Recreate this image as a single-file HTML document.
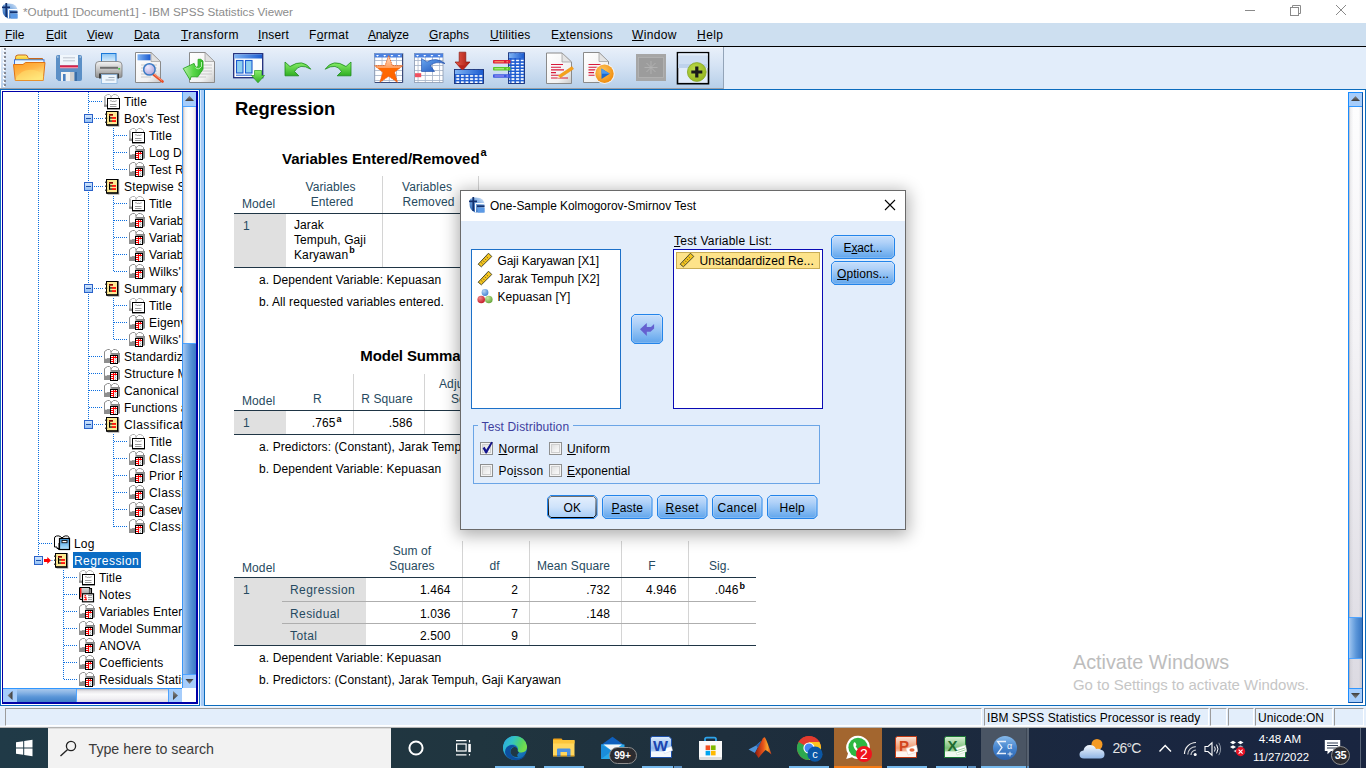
<!DOCTYPE html>
<html><head><meta charset="utf-8">
<style>
*{margin:0;padding:0;box-sizing:border-box}
html,body{width:1366px;height:768px;overflow:hidden;background:#fff;font-family:"Liberation Sans",sans-serif;}
.abs{position:absolute}
#titlebar{position:absolute;left:0;top:0;width:1366px;height:23px;background:#fff}
#titletext{position:absolute;left:23px;top:5px;font-size:11.7px;color:#8c8c8c;white-space:nowrap}
#menubar{position:absolute;left:0;top:23px;width:1366px;height:23px;background:#cddff0}
#menubar span{position:absolute;top:5px;font-size:12px;letter-spacing:.35px;color:#000;white-space:nowrap}
#menubar u{text-decoration:underline;text-underline-offset:1px}
#menuline{position:absolute;left:0;top:46px;width:1366px;height:1px;background:#000}
#toolbar{position:absolute;left:0;top:47px;width:723px;height:41px;background:linear-gradient(#e9f0fa 0%,#d5e3f4 45%,#b7cfe9 100%)}
#toolbar2{position:absolute;left:723px;top:47px;width:643px;height:42px;background:#e2edfa;border-left:1px solid #93a4b8}
#tbline1{position:absolute;left:0;top:88px;width:724px;height:1px;background:#9a9ea6}
#tbline2{position:absolute;left:0;top:89px;width:1366px;height:1px;background:#0c6cbd}
/* left panel */
#left{position:absolute;left:0;top:90px;width:200px;height:616px;background:#fff;border-left:1px solid #0c6cbd;border-bottom:1px solid #0c6cbd;border-right:1px solid #0c6cbd}
#leftin{position:absolute;left:2px;top:91px;width:196px;height:613px;border:1px solid #0000a8}
#treeclip{position:absolute;left:3px;top:92px;width:179px;height:596px;overflow:hidden}
#tree{position:absolute;left:-3px;top:-92px;width:400px;height:768px}
.vd{position:absolute;width:1px;background-image:linear-gradient(#0a6ee0 50%,transparent 50%);background-size:1px 2px}
.hd{position:absolute;height:1px;background-image:linear-gradient(90deg,#0a6ee0 50%,transparent 50%);background-size:2px 1px}
.tt{position:absolute;height:16px;line-height:18px;font-size:12px;letter-spacing:.15px;white-space:nowrap;color:#000;padding:0 1px}
.tt.sel{background:#0a6cc4;color:#fff}
#split{position:absolute;left:200px;top:90px;width:4px;height:616px;background:#a6cbf7;border-left:1px solid #d8ecff}
#right{position:absolute;left:204px;top:90px;width:1162px;height:616px;background:#fff;border-left:1px solid #0c6cbd;border-bottom:1px solid #0c6cbd}
#status{position:absolute;left:0;top:706px;width:1366px;height:22px;background:linear-gradient(#f4f8fd 0,#e3eefb 2px,#e3eefb 19px,#f4f7fb 20px,#f4f7fb 100%)}
#taskbar{position:absolute;left:0;top:728px;width:1366px;height:40px;background:#1c2a3b}
/* scrollbars */
.sbtn{position:absolute;background:#a9cdf7;border:1px solid #5aa0ee}
.vthumb{position:absolute;background:linear-gradient(90deg,#9cc4f4 0%,#6ba5e6 35%,#4d8cd6 70%,#3b78c4 100%)}
.vtrack{position:absolute;background:linear-gradient(90deg,#c9c9cf 0%,#f4f4f6 30%,#ffffff 60%,#e9e9ee 100%)}


#dlg{position:absolute;left:460px;top:190px;width:446px;height:340px;background:#e2edfb;border:1px solid #6a6a6a;box-shadow:0 3px 16px 2px rgba(0,0,0,.33)}
#dlgtitle{position:absolute;left:461px;top:191px;width:444px;height:30px;background:#fff}
.dt{position:absolute;white-space:nowrap;font-size:12px;line-height:18px;color:#000;letter-spacing:.12px}
.dt u{text-underline-offset:1px}
.btn{position:absolute;height:24px;width:50px;font-size:12px;line-height:22px;text-align:center;color:#000;letter-spacing:.15px;border:1px solid #2c89e8;border-radius:4px;background:linear-gradient(#d0e4fb 0,#b5d3f8 35%,#86bbf2 70%,#62a6ed 100%)}
.btn u{text-underline-offset:1px}
.btn.def{border-color:#14141e;background:linear-gradient(#e8f2fd 0,#d2e5fb 40%,#b0d2f7 75%,#94c3f4 100%)}
.cb{position:absolute;width:13px;height:13px;border:1px solid #8e8f8f;box-shadow:0 0 0 1px #f4f4f4 inset,0 0 0 2px #cfcfcf inset;background:linear-gradient(135deg,#d8d8d8 0,#f2f2f2 60%,#fff 100%)}
.bl{position:absolute;font-size:12px;text-align:center;color:#000;letter-spacing:.15px;white-space:nowrap}
.bl u{text-underline-offset:1px}

.sf{position:absolute;top:708px;height:18px;border-top:1px solid #9c9c9c;border-left:1px solid #9c9c9c;border-right:1px solid #fff;border-bottom:1px solid #fff;background:#e3eefb}
.st{position:absolute;top:709px;font-size:12px;line-height:18px;letter-spacing:.07px;white-space:nowrap;color:#000}
.ind{position:absolute;top:766px;height:2px;background:#76b9ed}
.ind.d{background:#5b8fc0}

</style></head><body>
<svg width="0" height="0" style="position:absolute">
<defs>
<linearGradient id="gbox" x1="0" y1="0" x2="0" y2="1"><stop offset="0" stop-color="#d6e8fd"/><stop offset="1" stop-color="#8fbef5"/></linearGradient>
<linearGradient id="glog" x1="0" y1="0" x2="0" y2="1"><stop offset="0" stop-color="#3f97dd"/><stop offset="1" stop-color="#b4e4ff"/></linearGradient>
<linearGradient id="gcov" x1="0" y1="0" x2="0" y2="1"><stop offset="0" stop-color="#d8d8d8"/><stop offset="1" stop-color="#a8a8a8"/></linearGradient>
<symbol id="i-box" viewBox="0 0 9 9"><rect x=".5" y=".5" width="8" height="8" fill="url(#gbox)" stroke="#2b62c9"/><rect x="2" y="4" width="5" height="1" fill="#1d4fa8"/></symbol>
<symbol id="i-arrow" viewBox="0 0 10 9"><path d="M1 3H4.3V1L8 4.5L4.3 8V6H1Z" fill="#f00"/><rect x="8.4" y="4" width="1" height="1" fill="#1672e0"/></symbol>
<symbol id="i-book" viewBox="0 0 17 17">
<path d="M.5 13.500V3.500L2 2.500L3.500 1.500H5.500L6.500 2.500L7 3.600L8.500 2.500L9.500 1.500H11.500L13.500 2.500L14.500 3.500V8H7.500V13.500Z" fill="#fff" stroke="#adadad"/>
<rect x="0" y="4" width="1.800" height="9.600" fill="#b0b0b0"/><rect x="0" y="11.600" width="4" height="2" fill="#8e8e8e"/>
<rect x="6.500" y="3" width="1" height="3" fill="#b0b0b0"/>
</symbol>
<symbol id="i-title" viewBox="0 0 17 17">
<use href="#i-book"/>
<rect x="3.5" y="5.5" width="12" height="10" fill="#fff" stroke="#000"/>
<rect x="3" y="15" width="13" height="1.4" fill="#000"/>
<path d="M6 7.8h1.6l1 1.2l1-1.2l1 1.2l1-1.2h1" stroke="#8a8a8a" fill="none" stroke-width=".8"/>
<rect x="6" y="11" width="6.500" height="1" fill="#9a9a9a"/><rect x="6" y="13" width="6.500" height="1" fill="#9a9a9a"/>
</symbol>
<symbol id="i-table" viewBox="0 0 17 17">
<path d="M.5 14.500V3.500L2 2.500L3.500 1.500H5.500L6.500 2.500L7 3.600L8.500 2.500L9.500 1.500H11.500L13.500 2.500L14.500 3.500V14.500Z" fill="#fff" stroke="#8c8c8c"/>
<rect x="7.500" y="5" width="7" height="9.500" fill="#949494"/><rect x="7" y="5" width="8" height="1.200" fill="#888"/>
<rect x="14.500" y="5" width="1.500" height="9.500" fill="#8c8c8c"/>
<rect x="6.500" y="3" width="1" height="4" fill="#8c8c8c"/>
<rect x="0" y="10.700" width="7.500" height="4.300" fill="#8e8e8e"/><rect x="3" y="10" width="4.500" height="1" fill="#999"/>
<rect x="6" y="7" width="8" height="9" fill="#000"/><rect x="7" y="8" width="6" height="7" fill="#fff"/>
<rect x="9" y="8" width="1.100" height="7" fill="#f00"/><rect x="7" y="9" width="6" height="1" fill="#f00"/>
<rect x="7" y="11" width="2.500" height="1" fill="#f00"/><rect x="7" y="13" width="2.500" height="1" fill="#f00"/><rect x="11" y="8" width="1" height="1" fill="#f00"/>
<rect x="11" y="10" width="1" height="5" fill="#a8b2b2"/><rect x="10.100" y="11" width="2.900" height="1" fill="#dfe6e6"/><rect x="10.100" y="13" width="2.900" height="1" fill="#dfe6e6"/>
</symbol>
<symbol id="i-head" viewBox="0 0 15 16">
<rect x="1.5" y=".5" width="11" height="13.5" fill="#fde992" stroke="#000"/>
<rect x="12" y="0" width="1.6" height="14.8" fill="#000"/><rect x="1.5" y="13.4" width="12.1" height="1.5" fill="#000"/>
<rect x="2.6" y="14.8" width="11.6" height=".7" fill="#888"/><rect x="13.6" y="1" width=".6" height="14.3" fill="#888"/>
<rect x="0" y="2.6" width="2.2" height="1.2" fill="#222"/><rect x="0" y="6.6" width="2.2" height="1.2" fill="#222"/><rect x="0" y="10.6" width="2.2" height="1.2" fill="#222"/>
<rect x="4" y="3" width="4" height="1.7" fill="#8b0000"/>
<rect x="4" y="4.700" width="1.100" height="5.800" fill="#000"/><rect x="4" y="6.400" width="3.200" height="1.100" fill="#000"/><rect x="4" y="9.500" width="3.200" height="1.100" fill="#000"/>
<rect x="7" y="6.1" width="4" height="1.7" fill="#f00"/><rect x="7" y="9.2" width="4" height="1.7" fill="#f00"/>
</symbol>
<symbol id="i-log" viewBox="0 0 17 17">
<path d="M.5 12V3Q.5 1.5 2.5 1Q5 .3 7 2L8 3L9 2Q11 .3 13.5 1Q15.5 2 15.5 4V8H5V13.5H3V12Z" fill="#fff" stroke="#000"/>
<rect x="5.5" y="3.5" width="10" height="11" fill="url(#glog)" stroke="#000" stroke-width="1.2"/>
<rect x="4.2" y="14" width="11.5" height="1" fill="#000"/>
<rect x="8" y="5.5" width="5" height="2.2" fill="#fff" stroke="#111" stroke-width=".9"/>
</symbol>
<symbol id="i-notes" viewBox="0 0 17 17">
<path d="M1 1.5H10.5V2.5H12.5V8H3.5V13.5H1.5L.5 12.5V2Z" fill="#fff" stroke="#000" stroke-width="1.1"/>
<rect x="2" y="2" width="8" height="5.8" fill="url(#gcov)"/>
<rect x="1.1" y="2" width="1.3" height="9.5" fill="#f00"/>
<rect x="10.3" y="2.8" width="1.6" height="5" fill="#fff" stroke="#000" stroke-width=".7"/>
<rect x="3.5" y="7.8" width="11" height="8" fill="#fff" stroke="#000" stroke-width="1.2"/>
<rect x="5.6" y="9" width="1.3" height="1.2" fill="#f00"/><path d="M5 11.2H6.9V13.6M4.8 13.8H8" stroke="#f00" stroke-width="1.1" fill="none"/>
<path d="M9 9.6h4M9 11.6h4M9 13.6h4" stroke="#8a8a8a" stroke-width=".9"/>
</symbol>

<linearGradient id="gspss" x1="1" y1="0" x2="0" y2="1"><stop offset="0" stop-color="#e4eefa"/><stop offset=".35" stop-color="#8db6e6"/><stop offset="1" stop-color="#1d5cb2"/></linearGradient>
<symbol id="i-spss" viewBox="0 0 16 16">
<path d="M1 2Q5 -.5 11 1Q15.5 3 15.5 8V15.5H6Q0.5 13 .5 7Z" fill="url(#gspss)"/>
<rect x="3.4" y="0" width="1.8" height="14" fill="#12306e"/><rect x="0" y="3.5" width="8" height="1.7" fill="#12306e"/>
<path d="M6.5 15.5V6.5H15.5" stroke="#fff" stroke-width="1" fill="none"/>
<rect x="8" y="8.3" width="7.5" height="1.8" fill="#12306e"/>
<rect x="9" y="11" width="6.5" height="4.5" fill="#5c9ae6"/>
</symbol>
<symbol id="i-ruler" viewBox="0 0 16 16">
<path d="M1.2 12.2L11.5 1.2L14.8 4.5L4.4 14.8Z" fill="#f5c51e" stroke="#4d4a2a" stroke-width="1"/>
<path d="M4.2 10.5l1.4 1.4M6 8.6l1.4 1.4M7.8 6.7l1.4 1.4M9.6 4.8l1.4 1.4" stroke="#6a5a20" stroke-width=".8"/>
</symbol>
<radialGradient id="gbl" cx=".35" cy=".3" r=".8"><stop offset="0" stop-color="#b5d4f5"/><stop offset="1" stop-color="#3d7dd0"/></radialGradient>
<radialGradient id="grd" cx=".35" cy=".3" r=".8"><stop offset="0" stop-color="#f08a8a"/><stop offset="1" stop-color="#c01020"/></radialGradient>
<radialGradient id="ggr" cx=".35" cy=".3" r=".8"><stop offset="0" stop-color="#c8e8a0"/><stop offset="1" stop-color="#5da030"/></radialGradient>
<symbol id="i-balls" viewBox="0 0 16 16">
<circle cx="8" cy="4.5" r="3.4" fill="url(#gbl)"/><circle cx="4.2" cy="11.5" r="3.8" fill="url(#grd)"/><circle cx="11.8" cy="11.5" r="3.8" fill="url(#ggr)"/>
</symbol>
</defs></svg>

<div id="titlebar"><svg class="abs" style="left:2px;top:3px" width="16" height="16"><use href="#i-spss"/></svg>
<div id="titletext">*Output1 [Document1] - IBM SPSS Statistics Viewer</div><svg class="abs" style="left:1240px;top:0" width="120" height="23"><g fill="none" stroke="#8a8a8a" stroke-width="1"><path d="M5 10.5H15"/><rect x="50.5" y="7.5" width="8" height="8"/><path d="M52.500 7.500V5.500H60.500V13.500H58.500"/><path d="M96 5L106 15M106 5L96 15"/></g></svg>
</div>
<div id="menubar">
<span style="left:5px;letter-spacing:0.05px"><u>F</u>ile</span>
<span style="left:46px;letter-spacing:0.05px"><u>E</u>dit</span>
<span style="left:87px;letter-spacing:0px"><u>V</u>iew</span>
<span style="left:134px;letter-spacing:0.1px"><u>D</u>ata</span>
<span style="left:181px;letter-spacing:0.4px"><u>T</u>ransform</span>
<span style="left:258px;letter-spacing:0.15px"><u>I</u>nsert</span>
<span style="left:309px;letter-spacing:0.3px">F<u>o</u>rmat</span>
<span style="left:368px;letter-spacing:-0.3px"><u>A</u>nalyze</span>
<span style="left:429px;letter-spacing:0.15px"><u>G</u>raphs</span>
<span style="left:490px;letter-spacing:0.2px"><u>U</u>tilities</span>
<span style="left:551px;letter-spacing:0.35px">E<u>x</u>tensions</span>
<span style="left:632px;letter-spacing:0.35px"><u>W</u>indow</span>
<span style="left:697px;letter-spacing:0.45px"><u>H</u>elp</span>
</div>
<div id="menuline"></div>
<div id="toolbar"></div><div id="toolbar2"></div>
<div class="abs" style="left:0;top:47px;width:1px;height:41px;background:#fff"></div>
<div class="abs" style="left:0;top:47px;width:723px;height:1px;background:#f8fbfe"></div>
<div class="abs" style="left:3px;top:49px;width:2px;height:39px;background-image:linear-gradient(#fff 0,#fff 2px,transparent 2px);background-size:2px 4px"></div>
<div class="abs" style="left:4px;top:48px;width:2px;height:39px;background-image:linear-gradient(#868a94 0,#868a94 2px,transparent 2px);background-size:2px 4px"></div>
<svg class="abs" style="left:0;top:47px" width="723" height="41" viewBox="0 47 723 41">
<defs>
<linearGradient id="tf1" x1="0" y1="0" x2="0" y2="1"><stop offset="0" stop-color="#fff27a"/><stop offset="1" stop-color="#f5b000"/></linearGradient>
<linearGradient id="tf2" x1="0" y1="0" x2=".6" y2="1"><stop offset="0" stop-color="#ff9a1e"/><stop offset=".5" stop-color="#ffb648"/><stop offset="1" stop-color="#ffee8a"/></linearGradient>
<linearGradient id="tpg" x1="0" y1="0" x2="1" y2="1"><stop offset="0" stop-color="#ffffff"/><stop offset=".7" stop-color="#f2f2f2"/><stop offset="1" stop-color="#c8c8c8"/></linearGradient>
<linearGradient id="tpr" x1="0" y1="0" x2="0" y2="1"><stop offset="0" stop-color="#f4f4f4"/><stop offset=".5" stop-color="#c4c4c4"/><stop offset="1" stop-color="#8e8e8e"/></linearGradient>
<linearGradient id="tbl" x1="0" y1="0" x2="0" y2="1"><stop offset="0" stop-color="#8ac4f4"/><stop offset="1" stop-color="#e8f6ff"/></linearGradient>
<linearGradient id="tgr" x1="0" y1="0" x2="0" y2="1"><stop offset="0" stop-color="#8af06a"/><stop offset="1" stop-color="#2fae22"/></linearGradient>
<linearGradient id="tgr2" x1="0" y1="0" x2="1" y2="0"><stop offset="0" stop-color="#b8f0a8"/><stop offset=".5" stop-color="#5ad848"/><stop offset="1" stop-color="#30b828"/></linearGradient>
<linearGradient id="tst" x1="0" y1="0" x2="0" y2="1"><stop offset="0" stop-color="#ffe0c8"/><stop offset=".45" stop-color="#ffa060"/><stop offset=".46" stop-color="#ff6a00"/><stop offset="1" stop-color="#ff6200"/></linearGradient>
<linearGradient id="thd" x1="0" y1="0" x2="1" y2="0"><stop offset="0" stop-color="#7fb4f4"/><stop offset="1" stop-color="#1c5cd0"/></linearGradient>
<linearGradient id="tba" x1="0" y1="0" x2="1" y2="1"><stop offset="0" stop-color="#6aa8f0"/><stop offset="1" stop-color="#1a50b8"/></linearGradient>
<linearGradient id="tra" x1="0" y1="0" x2="1" y2="0"><stop offset="0" stop-color="#e85a4a"/><stop offset="1" stop-color="#a81a10"/></linearGradient>
<radialGradient id="tor" cx=".4" cy=".35" r=".7"><stop offset="0" stop-color="#ffc860"/><stop offset="1" stop-color="#ef8a0a"/></radialGradient>
<radialGradient id="tgn" cx=".4" cy=".35" r=".7"><stop offset="0" stop-color="#bedc4a"/><stop offset="1" stop-color="#93b41e"/></radialGradient>
<radialGradient id="tln" cx=".35" cy=".3" r=".8"><stop offset="0" stop-color="#f0ecff"/><stop offset="1" stop-color="#a8a0d8"/></radialGradient>
<pattern id="tgrid" x="0" y="0" width="4.6" height="3.1" patternUnits="userSpaceOnUse"><rect width="4.6" height="3.1" fill="#1a5ad0"/><rect x=".9" y=".8" width="3" height="1.6" fill="#fff"/></pattern>
<pattern id="tgrid2" x="0" y="0" width="7.2" height="5" patternUnits="userSpaceOnUse"><rect width="7.2" height="5" fill="#fff"/><path d="M0 .4H7.2M.4 0V5" stroke="#a8b4c8" stroke-width=".9"/></pattern>
</defs>
<!-- folder -->
<path d="M15.500 62V57.500Q15.500 55 18 55H25.500Q27.500 55 28 57.500L28.500 58.500H42.500V62Z" fill="url(#tf1)" stroke="#c8661c"/>
<rect x="14.500" y="59.800" width="29.500" height="8" fill="#eaf6ff" stroke="#2a6ad8" stroke-width=".9"/>
<path d="M13.500 64.500H23L25.500 62.500H45L43.200 80.500H15.300Z" fill="url(#tf2)" stroke="#e07414"/>
<path d="M15 80.500Q20 68 34 70Q40 71 43.500 76L43.200 80.500Z" fill="#ffe070" opacity=".55"/>
<!-- save -->
<path d="M56 57Q56 55 58 55H80Q82 55 82 57V79Q82 81 80 81H58.500L56 78.500Z" fill="#5b8fc6"/>
<rect x="60" y="55" width="18" height="10.500" fill="#f0f6fc"/><path d="M63 57.800H75M63 60.800H75" stroke="#b0b8c4" stroke-width=".8"/>
<rect x="60" y="65.300" width="18" height="1.700" fill="#d82048"/><rect x="60" y="67" width="18" height="1.300" fill="#f08aa0"/>
<rect x="61" y="72" width="13.500" height="9" fill="#f2f2f2"/><rect x="70" y="72" width="4.500" height="9" fill="#d0d0d0"/><rect x="63" y="74" width="2.600" height="7" fill="#4a80c0"/><rect x="74.500" y="72" width="2.500" height="9" fill="#3a6ea8"/>
<rect x="57" y="56.500" width="1.500" height="1" fill="#dce8f4"/><rect x="79.500" y="56.500" width="1.500" height="1" fill="#dce8f4"/>
<!-- printer -->
<rect x="101.500" y="53.500" width="14.500" height="10" fill="url(#tbl)" stroke="#1a78d8"/>
<path d="M95.500 65Q95.500 61.500 99 61.500H118Q122 61.500 122 65V76Q122 77.500 120.500 77.500H97Q95.500 77.500 95.500 76Z" fill="url(#tpr)" stroke="#7a7a7a" stroke-width=".8"/>
<rect x="100" y="66.800" width="18" height="2" fill="#6e6e6e"/><rect x="118.300" y="68" width="1.800" height="1.600" fill="#3ad03a"/>
<rect x="99" y="73.500" width="20" height="5" fill="#3c3c3c"/>
<rect x="101.500" y="74.500" width="15.500" height="9" fill="#eef6fd" stroke="#8ab4dc" stroke-width=".8"/><path d="M108.500 77.500H114.500M105.500 80H114.500" stroke="#9aa8b8" stroke-width=".9"/>
<!-- preview -->
<path d="M135.500 52.500H151L160.500 61.500V82.500H135.500Z" fill="url(#tpg)" stroke="#8a8a8a"/><path d="M151 52.500V61.500H160.500Z" fill="#e0e0e0" stroke="#9a9a9a" stroke-width=".7"/>
<rect x="137.500" y="54.300" width="13" height="6" fill="url(#thd)"/>
<path d="M141 65H157M141 68H157M141 71H157M141 74H157M141 77H151" stroke="#c4c4c4" stroke-width=".9"/>
<path d="M153.500 74.500L162.500 81.500" stroke="#e8502a" stroke-width="2.800" stroke-linecap="round"/><path d="M154 74L162 80.500" stroke="#ffb090" stroke-width=".8"/>
<circle cx="149.400" cy="69.400" r="5.700" fill="url(#tln)" stroke="#3a7ac4" stroke-width="1.500"/>
<!-- export -->
<path d="M189.500 52.500H205L214.500 61.500V82.500H189.500Z" fill="url(#tpg)" stroke="#8a8a8a"/><path d="M205 52.500V61.500H214.500Z" fill="#e0e0e0" stroke="#9a9a9a" stroke-width=".7"/>
<path d="M200 65H212M200 68H212M200 71H212M200 74H212M196 77H206" stroke="#c4c4c4" stroke-width=".9"/>
<path d="M198.100 59.300H200.700L203 61V69.200L197.800 76.800H191L190.100 80L183.200 68.500L194.100 63.400L195 66Q196.500 68.200 198.100 66.400Z" fill="url(#tgr2)" stroke="#2aa622" stroke-width=".9"/><path d="M195.500 67.500Q198.500 70.500 201.500 66.500V62" fill="none" stroke="#d8ffd0" stroke-width="1" opacity=".8"/>
<!-- dialog recall -->
<rect x="233.700" y="53.700" width="29" height="24" fill="#fdfdfd" stroke="#1e2a78" stroke-width="1.300"/>
<rect x="234.300" y="54.300" width="27.800" height="4.200" fill="url(#thd)"/>
<rect x="236.500" y="60.500" width="6.500" height="12.500" fill="#8fd0f0" stroke="#1a5ad0" stroke-width="1.100"/><rect x="245.500" y="60.500" width="6.500" height="12.500" fill="#8fd0f0" stroke="#1a5ad0" stroke-width="1.100"/>
<path d="M236 75.200H252" stroke="#1a5ad0" stroke-width="1"/>
<path d="M254.500 70.500H261.500V75.500H264.500L258 82.800L251.500 75.500H254.500Z" fill="url(#tgr)" stroke="#2a9a22" stroke-width=".7"/>
<!-- undo -->
<path d="M285 62V75.800H298.800L294.500 71.500Q299.500 62.500 310.800 69.200Q303 58 290 66.500Z" fill="url(#tgr)" stroke="#1c8a1c" stroke-width=".8"/>
<!-- redo -->
<path d="M351 62V75.800H337.200L341.500 71.500Q336.500 62.500 325.200 69.200Q333 58 346 66.500Z" fill="url(#tgr)" stroke="#1c8a1c" stroke-width=".8"/>
<!-- star table -->
<rect x="374.500" y="53.500" width="28.500" height="29" fill="url(#tgrid2)" stroke="#8a98b0" stroke-width=".8"/>
<rect x="374.500" y="53.500" width="28.500" height="4" fill="#4a80e0"/><path d="M376 55L379 55L377.500 56.800ZM383.200 55L386.200 55L384.700 56.800ZM390.400 55L393.400 55L391.900 56.800ZM397.600 55L400.600 55L399.100 56.800Z" fill="#fff"/>
<path d="M402.500 54V82.500H375" stroke="#3a4a7a" stroke-width="1" fill="none"/>
<path d="M388.700 55.500L392.300 65.500L402.800 65.700L394.500 72.200L397.500 82.300L388.700 76.300L379.900 82.300L382.900 72.200L374.600 65.700L385.100 65.500Z" fill="url(#tst)" stroke="#e85a10" stroke-width=".8" stroke-dasharray="1.600 .6"/>
<!-- goto case -->
<rect x="414.500" y="53.500" width="28.500" height="29" fill="url(#tgrid2)" stroke="#8a98b0" stroke-width=".8"/>
<rect x="414.500" y="53.500" width="28.500" height="4" fill="#4a80e0"/><path d="M416 55L419 55L417.500 56.800ZM423.200 55L426.200 55L424.700 56.800ZM430.400 55L433.400 55L431.900 56.800ZM437.600 55L440.600 55L439.100 56.800Z" fill="#fff"/>
<rect x="415" y="73.200" width="6.200" height="4" fill="#f05060"/>
<path d="M421.500 58.500L427 62Q436 56.500 445 63.500Q435 61 430.500 65.500L434.500 71.500H421.500Z" fill="url(#tba)" stroke="#1a48a8" stroke-width=".6"/>
<!-- insert -->
<path d="M459.200 52.200H465.800V62H470L462.500 70.200L455 62H459.200Z" fill="url(#tra)" stroke="#8a1a10" stroke-width=".7"/>
<rect x="454.500" y="69.500" width="29" height="14" fill="url(#tgrid)" stroke="#16307a" stroke-width=".9"/>
<rect x="455" y="70" width="28" height="4" fill="url(#thd)"/>
<path d="M462.500 70.200L458 65.300H467Z" fill="#b8241a"/>
<!-- variables -->
<rect x="508.500" y="52.800" width="16" height="30.700" fill="url(#tgrid)" stroke="#16307a" stroke-width=".9"/>
<rect x="509" y="53.300" width="15" height="4.700" fill="url(#thd)"/>
<rect x="493" y="60" width="17.500" height="3.600" rx=".8" fill="#e0203a"/><path d="M494.500 61.800H504M506.500 61.800H508" stroke="#ffc070" stroke-width=".9"/>
<rect x="493" y="67" width="17.500" height="3.600" rx=".8" fill="#5ac82a"/><path d="M494.500 68.800H504M506.500 68.800H508" stroke="#d0f8a0" stroke-width=".9"/>
<rect x="493" y="74.200" width="17.500" height="3.600" rx=".8" fill="#3a5ae0"/><path d="M494.500 76H504M506.500 76H508" stroke="#c0a0f8" stroke-width=".9"/>
<!-- script edit -->
<path d="M546.500 53H562L571.500 62V83.500H546.500Z" fill="url(#tpg)" stroke="#8a8a8a"/><path d="M562 53V62H571.500Z" fill="#e4e4e4" stroke="#9a9a9a" stroke-width=".7"/>
<path d="M551 64.500H563M551 67.200H561M551 69.900H564M551 72.600H556M551 75.300H559M551 78H568" stroke="#d81a3a" stroke-width="1.100"/>
<path d="M558.500 75.500L572 66.500L573.500 69L560 78Z" fill="#f5a21a" stroke="#e88a10" stroke-width=".5"/><path d="M558.500 75.500L557 78.500L560 78Z" fill="#f8e0b0"/>
<!-- run script -->
<path d="M583.500 52.500H599L608.500 61.500V82.500H583.500Z" fill="url(#tpg)" stroke="#8a8a8a"/><path d="M599 52.500V61.500H608.500Z" fill="#e4e4e4" stroke="#9a9a9a" stroke-width=".7"/>
<path d="M588.500 64.500H601M588.500 67.200H598M588.500 69.900H601M588.500 72.600H594M588.500 75.300H596" stroke="#d81a3a" stroke-width="1.100"/>
<circle cx="604.500" cy="73.800" r="10.300" fill="#f4f4f4" opacity=".9"/><circle cx="604.500" cy="73.800" r="9.200" fill="url(#tor)"/>
<path d="M601.500 68.500L609.800 73.800L601.500 79.100Z" fill="#1a6ad0"/><path d="M601.500 68.500L609.800 73.800L601.500 73.800Z" fill="#4a9af0"/>
<!-- gray -->
<rect x="636" y="54" width="30" height="27" fill="#a6a6a6"/><rect x="638.500" y="57.500" width="25" height="20" fill="#9c9c9c" stroke="#b4b4b4" stroke-width=".8"/>
<path d="M651 61V74M644.500 67.500H657.500M646.500 63L655.500 72M655.500 63L646.500 72" stroke="#b2b2b2" stroke-width=".9"/>
<!-- plus frame -->
<rect x="677.500" y="52.700" width="31" height="31" fill="#e2ecfa" stroke="#000" stroke-width="1.600"/>
<rect x="678.300" y="53.500" width="29.400" height="14.500" fill="#cfdff3"/><rect x="678.300" y="53.500" width="29.400" height="2" fill="#e2ecf8"/><rect x="678.300" y="64" width="29.400" height="4" fill="#bed2ec"/>
<circle cx="696.800" cy="72" r="9.400" fill="url(#tgn)" stroke="#86a82a" stroke-width=".8"/>
<path d="M696.800 66.500V77.500M691.300 72H702.300" stroke="#1a1a1a" stroke-width="3.200"/>
</svg>

<div id="tbline1"></div><div id="tbline2"></div>
<div id="left"></div><div id="leftin"></div>
<div id="treeclip"><div id="tree">
<div class="vd" style="left:38px;top:92px;height:464px"></div>
<div class="vd" style="left:88px;top:92px;height:328px"></div>
<div class="vd" style="left:113px;top:128px;height:42px"></div>
<div class="vd" style="left:113px;top:196px;height:76px"></div>
<div class="vd" style="left:113px;top:298px;height:42px"></div>
<div class="vd" style="left:113px;top:434px;height:93px"></div>
<div class="vd" style="left:63px;top:570px;height:110px"></div>
<div class="hd" style="left:89px;top:101px;width:14px"></div>
<svg class="abs" style="left:104px;top:93px" width="17" height="17"><use href="#i-title"/></svg>
<div class="tt" style="left:123px;top:93px">Title</div>
<svg class="abs" style="left:84px;top:114px" width="9" height="9"><use href="#i-box"/></svg>
<div class="hd" style="left:94px;top:118px;width:9px"></div>
<svg class="abs" style="left:105px;top:111px" width="15" height="16"><use href="#i-head"/></svg>
<div class="tt" style="left:123px;top:110px">Box's Test of Equality</div>
<div class="hd" style="left:114px;top:135px;width:14px"></div>
<svg class="abs" style="left:129px;top:127px" width="17" height="17"><use href="#i-title"/></svg>
<div class="tt" style="left:148px;top:127px">Title</div>
<div class="hd" style="left:114px;top:152px;width:14px"></div>
<svg class="abs" style="left:129px;top:144px" width="17" height="17"><use href="#i-table"/></svg>
<div class="tt" style="left:148px;top:144px">Log Determinants</div>
<div class="hd" style="left:114px;top:169px;width:14px"></div>
<svg class="abs" style="left:129px;top:161px" width="17" height="17"><use href="#i-table"/></svg>
<div class="tt" style="left:148px;top:161px">Test Results</div>
<svg class="abs" style="left:84px;top:182px" width="9" height="9"><use href="#i-box"/></svg>
<div class="hd" style="left:94px;top:186px;width:9px"></div>
<svg class="abs" style="left:105px;top:179px" width="15" height="16"><use href="#i-head"/></svg>
<div class="tt" style="left:123px;top:178px">Stepwise Statistics</div>
<div class="hd" style="left:114px;top:203px;width:14px"></div>
<svg class="abs" style="left:129px;top:195px" width="17" height="17"><use href="#i-title"/></svg>
<div class="tt" style="left:148px;top:195px">Title</div>
<div class="hd" style="left:114px;top:220px;width:14px"></div>
<svg class="abs" style="left:129px;top:212px" width="17" height="17"><use href="#i-table"/></svg>
<div class="tt" style="left:148px;top:212px">Variables Entered</div>
<div class="hd" style="left:114px;top:237px;width:14px"></div>
<svg class="abs" style="left:129px;top:229px" width="17" height="17"><use href="#i-table"/></svg>
<div class="tt" style="left:148px;top:229px">Variables in the</div>
<div class="hd" style="left:114px;top:254px;width:14px"></div>
<svg class="abs" style="left:129px;top:246px" width="17" height="17"><use href="#i-table"/></svg>
<div class="tt" style="left:148px;top:246px">Variables Not in</div>
<div class="hd" style="left:114px;top:271px;width:14px"></div>
<svg class="abs" style="left:129px;top:263px" width="17" height="17"><use href="#i-table"/></svg>
<div class="tt" style="left:148px;top:263px">Wilks' Lambda</div>
<svg class="abs" style="left:84px;top:284px" width="9" height="9"><use href="#i-box"/></svg>
<div class="hd" style="left:94px;top:288px;width:9px"></div>
<svg class="abs" style="left:105px;top:281px" width="15" height="16"><use href="#i-head"/></svg>
<div class="tt" style="left:123px;top:280px">Summary of Canonical</div>
<div class="hd" style="left:114px;top:305px;width:14px"></div>
<svg class="abs" style="left:129px;top:297px" width="17" height="17"><use href="#i-title"/></svg>
<div class="tt" style="left:148px;top:297px">Title</div>
<div class="hd" style="left:114px;top:322px;width:14px"></div>
<svg class="abs" style="left:129px;top:314px" width="17" height="17"><use href="#i-table"/></svg>
<div class="tt" style="left:148px;top:314px">Eigenvalues</div>
<div class="hd" style="left:114px;top:339px;width:14px"></div>
<svg class="abs" style="left:129px;top:331px" width="17" height="17"><use href="#i-table"/></svg>
<div class="tt" style="left:148px;top:331px">Wilks' Lambda</div>
<div class="hd" style="left:89px;top:356px;width:14px"></div>
<svg class="abs" style="left:104px;top:348px" width="17" height="17"><use href="#i-table"/></svg>
<div class="tt" style="left:123px;top:348px">Standardized Can</div>
<div class="hd" style="left:89px;top:373px;width:14px"></div>
<svg class="abs" style="left:104px;top:365px" width="17" height="17"><use href="#i-table"/></svg>
<div class="tt" style="left:123px;top:365px">Structure Matrix</div>
<div class="hd" style="left:89px;top:390px;width:14px"></div>
<svg class="abs" style="left:104px;top:382px" width="17" height="17"><use href="#i-table"/></svg>
<div class="tt" style="left:123px;top:382px">Canonical Discri</div>
<div class="hd" style="left:89px;top:407px;width:14px"></div>
<svg class="abs" style="left:104px;top:399px" width="17" height="17"><use href="#i-table"/></svg>
<div class="tt" style="left:123px;top:399px">Functions at Group</div>
<svg class="abs" style="left:84px;top:420px" width="9" height="9"><use href="#i-box"/></svg>
<div class="hd" style="left:94px;top:424px;width:9px"></div>
<svg class="abs" style="left:105px;top:417px" width="15" height="16"><use href="#i-head"/></svg>
<div class="tt" style="left:123px;top:416px;letter-spacing:.45px">Classification Stat</div>
<div class="hd" style="left:114px;top:441px;width:14px"></div>
<svg class="abs" style="left:129px;top:433px" width="17" height="17"><use href="#i-title"/></svg>
<div class="tt" style="left:148px;top:433px">Title</div>
<div class="hd" style="left:114px;top:458px;width:14px"></div>
<svg class="abs" style="left:129px;top:450px" width="17" height="17"><use href="#i-table"/></svg>
<div class="tt" style="left:148px;top:450px;letter-spacing:.45px">Classification Pro</div>
<div class="hd" style="left:114px;top:475px;width:14px"></div>
<svg class="abs" style="left:129px;top:467px" width="17" height="17"><use href="#i-table"/></svg>
<div class="tt" style="left:148px;top:467px">Prior Probabilities</div>
<div class="hd" style="left:114px;top:492px;width:14px"></div>
<svg class="abs" style="left:129px;top:484px" width="17" height="17"><use href="#i-table"/></svg>
<div class="tt" style="left:148px;top:484px;letter-spacing:.45px">Classification Fun</div>
<div class="hd" style="left:114px;top:509px;width:14px"></div>
<svg class="abs" style="left:129px;top:501px" width="17" height="17"><use href="#i-table"/></svg>
<div class="tt" style="left:148px;top:501px">Casewise Statistics</div>
<div class="hd" style="left:114px;top:526px;width:14px"></div>
<svg class="abs" style="left:129px;top:518px" width="17" height="17"><use href="#i-table"/></svg>
<div class="tt" style="left:148px;top:518px;letter-spacing:.45px">Classification Res</div>
<div class="hd" style="left:39px;top:543px;width:14px"></div>
<svg class="abs" style="left:54px;top:535px" width="17" height="17"><use href="#i-log"/></svg>
<div class="tt" style="left:73px;top:535px">Log</div>
<svg class="abs" style="left:34px;top:556px" width="9" height="9"><use href="#i-box"/></svg>
<svg class="abs" style="left:43px;top:556px" width="10" height="9"><use href="#i-arrow"/></svg>
<svg class="abs" style="left:54px;top:553px" width="15" height="16"><use href="#i-head"/></svg>
<div class="tt sel" style="left:73px;top:552px;letter-spacing:.45px;padding-right:1.5px">Regression</div>
<div class="hd" style="left:64px;top:577px;width:14px"></div>
<svg class="abs" style="left:79px;top:569px" width="17" height="17"><use href="#i-title"/></svg>
<div class="tt" style="left:98px;top:569px">Title</div>
<div class="hd" style="left:64px;top:594px;width:14px"></div>
<svg class="abs" style="left:79px;top:586px" width="17" height="17"><use href="#i-notes"/></svg>
<div class="tt" style="left:98px;top:586px">Notes</div>
<div class="hd" style="left:64px;top:611px;width:14px"></div>
<svg class="abs" style="left:79px;top:603px" width="17" height="17"><use href="#i-table"/></svg>
<div class="tt" style="left:98px;top:603px">Variables Entered/Removed</div>
<div class="hd" style="left:64px;top:628px;width:14px"></div>
<svg class="abs" style="left:79px;top:620px" width="17" height="17"><use href="#i-table"/></svg>
<div class="tt" style="left:98px;top:620px">Model Summary</div>
<div class="hd" style="left:64px;top:645px;width:14px"></div>
<svg class="abs" style="left:79px;top:637px" width="17" height="17"><use href="#i-table"/></svg>
<div class="tt" style="left:98px;top:637px">ANOVA</div>
<div class="hd" style="left:64px;top:662px;width:14px"></div>
<svg class="abs" style="left:79px;top:654px" width="17" height="17"><use href="#i-table"/></svg>
<div class="tt" style="left:98px;top:654px">Coefficients</div>
<div class="hd" style="left:64px;top:679px;width:14px"></div>
<svg class="abs" style="left:79px;top:671px" width="17" height="17"><use href="#i-table"/></svg>
<div class="tt" style="left:98px;top:671px">Residuals Statistics</div>
</div></div>
<!-- left vscroll -->
<div class="abs" style="left:182px;top:92px;width:15px;height:596px;background:#fff;border-left:1px solid #3a96f6"></div>
<div class="abs" style="left:183px;top:107px;width:13px;height:236px;background:linear-gradient(90deg,#c4bcbc 0,#f2f0f0 14%,#ffffff 40%,#fbfafa 72%,#efecee 90%,#cdc7c9 100%)"></div>
<div class="abs" style="left:183px;top:343px;width:13px;height:331px;background:linear-gradient(90deg,#a3c6f0 0,#7fb0e6 25%,#5a95d8 55%,#4381cb 85%,#3a78c2 100%);border-top:1px solid #4da3ff"></div>
<div class="abs" style="left:183px;top:92px;width:13px;height:15px;background:#a6cdfb;border-bottom:1px solid #4da3ff"></div>
<svg class="abs" style="left:183px;top:92px" width="13" height="14"><defs><linearGradient id="garr" x1="0" y1="0" x2="0" y2="1"><stop offset="0" stop-color="#8a8a8a"/><stop offset="1" stop-color="#3a3a3a"/></linearGradient></defs><path d="M2 9L6.500 3.800L11 9Z" fill="url(#garr)"/></svg>
<div class="abs" style="left:183px;top:674px;width:13px;height:14px;background:#a6cdfb;border-top:1px solid #4da3ff"></div>
<svg class="abs" style="left:183px;top:674px" width="13" height="14"><defs><linearGradient id="garr2" x1="0" y1="0" x2="0" y2="1"><stop offset="0" stop-color="#3a3a3a"/><stop offset="1" stop-color="#8a8a8a"/></linearGradient></defs><path d="M2.5 5L10.5 5L6.5 10Z" fill="url(#garr2)"/></svg>
<div class="abs" style="left:196px;top:92px;width:2px;height:612px;background:#0000a8"></div>
<!-- left hscroll -->
<div class="abs" style="left:3px;top:688px;width:179px;height:14px;background:linear-gradient(#b9b5b9 0,#e6e4e8 15%,#fafafb 40%,#f0eff3 75%,#dddbe2 100%);border-top:1px solid #2f96ff"></div>
<div class="abs" style="left:17px;top:689px;width:60px;height:13px;background:linear-gradient(#a9c8ec 0,#86b2e4 30%,#5b96d8 60%,#3f7fc8 100%);border-right:1px solid #4da3ff"></div>
<div class="abs" style="left:3px;top:689px;width:14px;height:13px;background:#a6cdfb"></div>
<svg class="abs" style="left:3px;top:689px" width="14" height="13"><defs><linearGradient id="garr3" x1="0" y1="0" x2="1" y2="0"><stop offset="0" stop-color="#8a8a8a"/><stop offset="1" stop-color="#3a3a3a"/></linearGradient></defs><path d="M9.5 2L9.5 11L4.5 6.5Z" fill="url(#garr3)"/></svg>
<div class="abs" style="left:168px;top:689px;width:14px;height:13px;background:#a6cdfb;border-left:1px solid #4da3ff"></div>
<svg class="abs" style="left:168px;top:689px" width="14" height="13"><path d="M5 2L5 11L10 6.5Z" fill="url(#garr)"/></svg>
<div class="abs" style="left:182px;top:688px;width:14px;height:14px;background:#fff"></div>
<div class="abs" style="left:3px;top:702px;width:195px;height:2px;background:#0000a8"></div>

<div id="split"></div>
<div id="right"></div>
<div class="abs" style="top:94.62px;font-size:18.4px;line-height:28px;color:#000;letter-spacing:0px;white-space:nowrap;font-weight:bold;left:235px;">Regression</div>
<div class="abs" style="top:147.80px;font-size:15px;line-height:22px;color:#000;letter-spacing:0px;white-space:nowrap;font-weight:bold;left:282px;">Variables Entered/Removed<span style="font-size:11px;position:relative;top:-8px;margin-left:1px">a</span></div>
<div class="abs" style="top:194.84px;font-size:12px;line-height:18px;color:#264a60;letter-spacing:0.1px;white-space:nowrap;left:242px;">Model</div>
<div class="abs" style="top:177.84px;font-size:12px;line-height:18px;color:#264a60;letter-spacing:0.1px;white-space:nowrap;left:180.5px;width:300px;text-align:center;">Variables</div>
<div class="abs" style="top:192.84px;font-size:12px;line-height:18px;color:#264a60;letter-spacing:0.1px;white-space:nowrap;left:182px;width:300px;text-align:center;">Entered</div>
<div class="abs" style="top:177.84px;font-size:12px;line-height:18px;color:#264a60;letter-spacing:0.1px;white-space:nowrap;left:277px;width:300px;text-align:center;">Variables</div>
<div class="abs" style="top:192.84px;font-size:12px;line-height:18px;color:#264a60;letter-spacing:0.1px;white-space:nowrap;left:278.5px;width:300px;text-align:center;">Removed</div>
<div class="abs" style="left:382px;top:176px;width:1px;height:91px;background:#d4d4d4"></div>
<div class="abs" style="left:478px;top:176px;width:1px;height:91px;background:#d4d4d4"></div>
<div class="abs" style="left:234px;top:213px;width:300px;height:1px;background:#1f3545"></div>
<div class="abs" style="left:234px;top:214px;width:52px;height:53px;background:#e0e0e0"></div>
<div class="abs" style="left:234px;top:267px;width:300px;height:1px;background:#1f3545"></div>
<div class="abs" style="top:216.84px;font-size:12px;line-height:18px;color:#264a60;letter-spacing:0.1px;white-space:nowrap;left:243px;">1</div>
<div class="abs" style="top:215.84px;font-size:12px;line-height:18px;color:#000;letter-spacing:0.1px;white-space:nowrap;left:294px;">Jarak</div>
<div class="abs" style="top:230.84px;font-size:12px;line-height:18px;color:#000;letter-spacing:0.1px;white-space:nowrap;left:294px;">Tempuh, Gaji</div>
<div class="abs" style="top:245.84px;font-size:12px;line-height:18px;color:#000;letter-spacing:0.1px;white-space:nowrap;left:294px;">Karyawan<span style="font-size:9px;font-weight:bold;position:relative;top:-6px;letter-spacing:0;margin-left:1px">b</span></div>
<div class="abs" style="top:270.84px;font-size:12px;line-height:18px;color:#000;letter-spacing:0.1px;white-space:nowrap;left:259px;">a. Dependent Variable: Kepuasan</div>
<div class="abs" style="top:292.84px;font-size:12px;line-height:18px;color:#000;letter-spacing:0.1px;white-space:nowrap;left:259px;">b. All requested variables entered.</div>
<div class="abs" style="top:344.80px;font-size:15px;line-height:22px;color:#000;letter-spacing:-0.15px;white-space:nowrap;font-weight:bold;left:360.3px;">Model Summary</div>
<div class="abs" style="top:391.84px;font-size:12px;line-height:18px;color:#264a60;letter-spacing:0.1px;white-space:nowrap;left:242px;">Model</div>
<div class="abs" style="top:389.84px;font-size:12px;line-height:18px;color:#264a60;letter-spacing:0.1px;white-space:nowrap;left:167.5px;width:300px;text-align:center;">R</div>
<div class="abs" style="top:389.84px;font-size:12px;line-height:18px;color:#264a60;letter-spacing:0.1px;white-space:nowrap;left:237px;width:300px;text-align:center;">R Square</div>
<div class="abs" style="top:374.84px;font-size:12px;line-height:18px;color:#264a60;letter-spacing:0.1px;white-space:nowrap;left:439px;">Adjusted R</div>
<div class="abs" style="top:389.84px;font-size:12px;line-height:18px;color:#264a60;letter-spacing:0.1px;white-space:nowrap;left:451px;">Square</div>
<div class="abs" style="left:353px;top:374px;width:1px;height:60px;background:#d4d4d4"></div>
<div class="abs" style="left:424px;top:374px;width:1px;height:60px;background:#d4d4d4"></div>
<div class="abs" style="left:234px;top:410px;width:300px;height:1px;background:#1f3545"></div>
<div class="abs" style="left:234px;top:411px;width:52px;height:23px;background:#e0e0e0"></div>
<div class="abs" style="left:234px;top:434px;width:300px;height:1px;background:#1f3545"></div>
<div class="abs" style="top:413.84px;font-size:12px;line-height:18px;color:#264a60;letter-spacing:0.1px;white-space:nowrap;left:243px;">1</div>
<div class="abs" style="top:413.84px;font-size:12px;line-height:18px;color:#000;letter-spacing:0.1px;white-space:nowrap;right:1030.5px;">.765</div>
<div class="abs" style="left:336.5px;top:414px;font-size:9px;font-weight:bold">a</div>
<div class="abs" style="top:413.84px;font-size:12px;line-height:18px;color:#000;letter-spacing:0.1px;white-space:nowrap;right:953.5px;">.586</div>
<div class="abs" style="top:437.84px;font-size:12px;line-height:18px;color:#000;letter-spacing:0.1px;white-space:nowrap;left:259px;">a. Predictors: (Constant), Jarak Tempuh, Gaji Karyawan</div>
<div class="abs" style="top:459.84px;font-size:12px;line-height:18px;color:#000;letter-spacing:0.1px;white-space:nowrap;left:259px;">b. Dependent Variable: Kepuasan</div>
<div class="abs" style="top:558.84px;font-size:12px;line-height:18px;color:#264a60;letter-spacing:0.1px;white-space:nowrap;left:242px;">Model</div>
<div class="abs" style="top:541.84px;font-size:12px;line-height:18px;color:#264a60;letter-spacing:0.1px;white-space:nowrap;left:262px;width:300px;text-align:center;">Sum of</div>
<div class="abs" style="top:556.84px;font-size:12px;line-height:18px;color:#264a60;letter-spacing:0.1px;white-space:nowrap;left:262px;width:300px;text-align:center;">Squares</div>
<div class="abs" style="top:556.84px;font-size:12px;line-height:18px;color:#264a60;letter-spacing:0.1px;white-space:nowrap;left:344.5px;width:300px;text-align:center;">df</div>
<div class="abs" style="top:556.84px;font-size:12px;line-height:18px;color:#264a60;letter-spacing:0.1px;white-space:nowrap;left:423.5px;width:300px;text-align:center;">Mean Square</div>
<div class="abs" style="top:556.84px;font-size:12px;line-height:18px;color:#264a60;letter-spacing:0.1px;white-space:nowrap;left:502px;width:300px;text-align:center;">F</div>
<div class="abs" style="top:556.84px;font-size:12px;line-height:18px;color:#264a60;letter-spacing:0.1px;white-space:nowrap;left:569.5px;width:300px;text-align:center;">Sig.</div>
<div class="abs" style="left:462px;top:541px;width:1px;height:104px;background:#d4d4d4"></div>
<div class="abs" style="left:529px;top:541px;width:1px;height:104px;background:#d4d4d4"></div>
<div class="abs" style="left:621px;top:541px;width:1px;height:104px;background:#d4d4d4"></div>
<div class="abs" style="left:688px;top:541px;width:1px;height:104px;background:#d4d4d4"></div>
<div class="abs" style="left:234px;top:577px;width:522px;height:1px;background:#1f3545"></div>
<div class="abs" style="left:234px;top:578px;width:132px;height:67px;background:#e0e0e0"></div>
<div class="abs" style="left:282px;top:601px;width:474px;height:1px;background:#aeaeae"></div>
<div class="abs" style="left:282px;top:623px;width:474px;height:1px;background:#aeaeae"></div>
<div class="abs" style="left:234px;top:645px;width:522px;height:1px;background:#1f3545"></div>
<div class="abs" style="top:580.84px;font-size:12px;line-height:18px;color:#264a60;letter-spacing:0.1px;white-space:nowrap;left:243px;">1</div>
<div class="abs" style="top:580.84px;font-size:12px;line-height:18px;color:#264a60;letter-spacing:0.45px;white-space:nowrap;left:290px;">Regression</div>
<div class="abs" style="top:604.84px;font-size:12px;line-height:18px;color:#264a60;letter-spacing:0.4px;white-space:nowrap;left:290px;">Residual</div>
<div class="abs" style="top:626.84px;font-size:12px;line-height:18px;color:#264a60;letter-spacing:0.4px;white-space:nowrap;left:290px;">Total</div>
<div class="abs" style="top:580.84px;font-size:12px;line-height:18px;color:#000;letter-spacing:0.1px;white-space:nowrap;right:915.5px;">1.464</div>
<div class="abs" style="top:604.84px;font-size:12px;line-height:18px;color:#000;letter-spacing:0.1px;white-space:nowrap;right:915.5px;">1.036</div>
<div class="abs" style="top:626.84px;font-size:12px;line-height:18px;color:#000;letter-spacing:0.1px;white-space:nowrap;right:915.5px;">2.500</div>
<div class="abs" style="top:580.84px;font-size:12px;line-height:18px;color:#000;letter-spacing:0.1px;white-space:nowrap;right:848px;">2</div>
<div class="abs" style="top:604.84px;font-size:12px;line-height:18px;color:#000;letter-spacing:0.1px;white-space:nowrap;right:848px;">7</div>
<div class="abs" style="top:626.84px;font-size:12px;line-height:18px;color:#000;letter-spacing:0.1px;white-space:nowrap;right:848px;">9</div>
<div class="abs" style="top:580.84px;font-size:12px;line-height:18px;color:#000;letter-spacing:0.1px;white-space:nowrap;right:756px;">.732</div>
<div class="abs" style="top:604.84px;font-size:12px;line-height:18px;color:#000;letter-spacing:0.1px;white-space:nowrap;right:756px;">.148</div>
<div class="abs" style="top:580.84px;font-size:12px;line-height:18px;color:#000;letter-spacing:0.1px;white-space:nowrap;right:689.5px;">4.946</div>
<div class="abs" style="top:580.84px;font-size:12px;line-height:18px;color:#000;letter-spacing:0.1px;white-space:nowrap;right:627.5px;">.046</div>
<div class="abs" style="left:739.5px;top:581px;font-size:9px;font-weight:bold">b</div>
<div class="abs" style="top:648.84px;font-size:12px;line-height:18px;color:#000;letter-spacing:0.1px;white-space:nowrap;left:259px;">a. Dependent Variable: Kepuasan</div>
<div class="abs" style="top:670.84px;font-size:12px;line-height:18px;color:#000;letter-spacing:0.1px;white-space:nowrap;left:259px;">b. Predictors: (Constant), Jarak Tempuh, Gaji Karyawan</div>
<div class="abs" style="top:647.14px;font-size:19.8px;line-height:30px;color:#bdbdbd;letter-spacing:0px;white-space:nowrap;left:1073px;">Activate Windows</div>
<div class="abs" style="top:673.82px;font-size:14.95px;line-height:22px;color:#c6c6c6;letter-spacing:0px;white-space:nowrap;left:1073px;">Go to Settings to activate Windows.</div>
<div id="status"></div>
<!-- right vscroll -->
<div class="abs" style="left:1365px;top:90px;width:1px;height:616px;background:#0c6cbd"></div>
<div class="abs" style="left:1348px;top:92px;width:15px;height:611px;background:#fff;border-left:1px solid #1a8cff;border-right:1px solid #0b4fa0;border-top:1px solid #1a8cff;border-bottom:1px solid #0b4fa0"></div>
<div class="abs" style="left:1349px;top:107px;width:13px;height:581px;background:linear-gradient(#fdfdfe 0,#f4f3f6 40%,#dcdae2 100%)"></div>
<div class="abs" style="left:1349px;top:107px;width:13px;height:581px;background:linear-gradient(90deg,rgba(120,115,120,.55) 0,rgba(160,160,165,.15) 12%,rgba(255,255,255,0) 35%,rgba(255,255,255,0) 75%,rgba(150,150,160,.25) 100%)"></div>
<div class="abs" style="left:1349px;top:617px;width:13px;height:42px;background:linear-gradient(90deg,#a3c6f0 0,#7fb0e6 25%,#5a95d8 55%,#4381cb 85%,#3a78c2 100%);border-top:1px solid #4da3ff;border-bottom:1px solid #4da3ff"></div>
<div class="abs" style="left:1349px;top:93px;width:13px;height:14px;background:#a6cdfb;border-bottom:1px solid #2f96ff"></div>
<svg class="abs" style="left:1349px;top:93px" width="13" height="13"><path d="M2 8L6.500 3L11 8Z" fill="url(#garr)"/></svg>
<div class="abs" style="left:1349px;top:688px;width:13px;height:14px;background:#a6cdfb;border-top:1px solid #2f96ff"></div>
<svg class="abs" style="left:1349px;top:689px" width="13" height="13"><path d="M2 4L11 4L6.5 9.5Z" fill="url(#garr2)"/></svg>
<!-- status fields -->
<div class="sf" style="left:5px;width:977px"></div>
<div class="sf" style="left:984px;width:225px"></div>
<div class="sf" style="left:1210px;width:17px"></div>
<div class="sf" style="left:1228px;width:26px"></div>
<div class="sf" style="left:1255px;width:78px"></div>
<div class="sf" style="left:1334px;width:30px"></div>
<div class="st" style="left:987px">IBM SPSS Statistics Processor is ready</div>
<div class="st" style="left:1258px">Unicode:ON</div>

<div id="taskbar"></div>
<div class="abs" style="left:0;top:727px;width:1366px;height:1px;background:#b4b4b4"></div>
<div class="abs" style="left:0;top:728px;width:1366px;height:40px;background:linear-gradient(90deg,#203a47 0,#20353f 35%,#1d2c3c 62%,#1a2740 80%,#192540 100%)"></div>
<!-- start -->
<svg class="abs" style="left:16px;top:739px" width="17" height="18"><path d="M0 3.2L7.2 2.2V8.5H0ZM8.2 2L16.5 .8V8.5H8.2ZM0 9.5H7.2V15.8L0 14.8ZM8.2 9.5H16.5V17.2L8.2 16Z" fill="#fff"/></svg>
<!-- search -->
<div class="abs" style="left:48px;top:728px;width:343px;height:40px;background:#f2f2f2;border-top:1px solid #dcdcdc"></div>
<svg class="abs" style="left:58px;top:739px" width="20" height="20"><circle cx="13" cy="7" r="4.6" fill="none" stroke="#222" stroke-width="1.3"/><path d="M9.6 10.6L2.5 17" stroke="#222" stroke-width="1.4"/></svg>
<div class="abs" style="left:88.5px;top:738px;font-size:14.2px;line-height:22px;color:#3b3b3b;white-space:nowrap">Type here to search</div>
<!-- cortana -->
<svg class="abs" style="left:407px;top:739px" width="18" height="18"><circle cx="9" cy="9" r="6.6" fill="none" stroke="#fff" stroke-width="2"/></svg>
<!-- task view -->
<svg class="abs" style="left:455px;top:739px" width="18" height="18"><g fill="none" stroke="#fff" stroke-width="1.2"><rect x="1.6" y="5" width="9.5" height="7"/><path d="M1 1.6H11.5M1 15.8H11.5M14.5 1V3.5M14.5 15V16.5"/><rect x="13.9" y="5.5" width="1.3" height="7" fill="#fff"/></g></svg>
<!-- edge -->
<svg class="abs" style="left:502px;top:735px" width="26" height="26"><defs><linearGradient id="ge1" x1="0" y1="0" x2="1" y2="1"><stop offset="0" stop-color="#35c1f1"/><stop offset="1" stop-color="#0c59a4"/></linearGradient><linearGradient id="ge2" x1="0" y1="0" x2="1" y2=".35"><stop offset="0" stop-color="#2aa2e4"/><stop offset=".45" stop-color="#33c3c3"/><stop offset=".8" stop-color="#55d464"/><stop offset="1" stop-color="#74dc4e"/></linearGradient></defs>
<circle cx="13" cy="13" r="12" fill="url(#ge1)"/>
<path d="M1.2 11Q3 1.5 13 1Q23 1.5 25 11Q25.5 17 19.5 17.5Q15.5 17.5 16 14.5Q16.5 12 13.5 10Q9 8 5 11.5Q2.5 14 3 18Q.5 15 1.2 11Z" fill="url(#ge2)"/>
<path d="M3 17Q3.5 11 9 10Q14 9.5 15.5 13.5Q15 11.5 12.5 11.8Q8 12.5 8.5 17.5Q9.5 23 17 23.5Q21 23 23.5 20Q20 26 12 25Q4 23.5 3 17Z" fill="#0d4f9e"/>
<path d="M8.5 17.5Q8.3 13 12 12Q15 11.5 15.6 14Q15 16.5 17 17.8Q14 20 16 22Q10 22.5 8.5 17.5Z" fill="#203845"/>
</svg>
<!-- explorer -->
<svg class="abs" style="left:553px;top:738px" width="22" height="19"><path d="M0 1.5Q0 .5 1 .5H8.5L10 2.5H0Z" fill="#f0a31a"/><rect x="0" y="2" width="21.5" height="16" rx="1" fill="#ffd75e"/><rect x="0" y="2" width="21.5" height="3.5" fill="#fbc53b"/><path d="M4 18V11.5Q4 10.5 5 10.5H16.5Q17.5 10.5 17.5 11.5V18H14V14H7.5V18Z" fill="#4a90e2"/><rect x="0" y="17" width="21.5" height="1.600" fill="#e0a92e"/><rect x="4" y="17" width="3.500" height="1.600" fill="#3572c0"/><rect x="14" y="17" width="3.500" height="1.600" fill="#3572c0"/></svg>
<!-- mail -->
<svg class="abs" style="left:600px;top:736px" width="26" height="24"><path d="M1 9L12.5 .8L24 9Z" fill="#0f5fbd"/><rect x="1" y="8.5" width="23.5" height="14.5" fill="#29a8ea"/><path d="M3.5 8.5H22L12.7 15.5Z" fill="#f4f6f8"/><path d="M1 8.5V23L12 15Z" fill="#1b8ddb"/></svg>
<div class="abs" style="left:608.5px;top:747px;width:28px;height:17px;border-radius:9px;background:#2b2b2f;border:1px solid #8e8e8e"></div>
<div class="abs" style="left:608.5px;top:747px;width:28px;height:17px;line-height:17px;text-align:center;font-size:10px;font-weight:bold;color:#fff;letter-spacing:-.1px">99+</div>
<!-- word -->
<svg class="abs" style="left:650px;top:736px" width="23" height="22"><defs><linearGradient id="gw" x1="0" y1="0" x2="0" y2="1"><stop offset="0" stop-color="#dcebfb"/><stop offset=".55" stop-color="#8fb9ee"/><stop offset="1" stop-color="#f2f7fd"/></linearGradient></defs>
<path d="M2 .5H19L21.5 3V21.5H.5V2Z" fill="url(#gw)" stroke="#1c4fa8"/>
<rect x="1" y="15.5" width="20" height="5.5" fill="#f4f8fd"/>
<path d="M13 13L21.5 10.5L22.5 14.5L14.5 17.5Z" fill="#fff" stroke="#c8d6ea" stroke-width=".5"/>
<text x="3" y="14.5" font-family="Liberation Sans" font-weight="bold" font-size="14" fill="#1a45b0" textLength="15" lengthAdjust="spacingAndGlyphs">W</text></svg>
<!-- store -->
<svg class="abs" style="left:698px;top:736px" width="25" height="25"><path d="M7 6V3.2Q7 1.6 8.6 1.6H16.4Q18 1.6 18 3.2V6" fill="none" stroke="#2ea3ea" stroke-width="1.8"/><path d="M1 5H24V21Q24 24 21 24H4Q1 24 1 21Z" fill="#fafafa"/><rect x="1" y="21" width="23" height="3" rx="1.5" fill="#dcdcdc"/>
<rect x="7.6" y="9.4" width="4.6" height="4.6" fill="#f25022"/><rect x="13" y="9.4" width="4.6" height="4.6" fill="#7fba00"/><rect x="7.6" y="14.8" width="4.6" height="4.6" fill="#00a4ef"/><rect x="13" y="14.8" width="4.6" height="4.6" fill="#ffb900"/></svg>
<!-- matlab -->
<svg class="abs" style="left:748px;top:736px" width="25" height="24"><defs><linearGradient id="gm" x1="0" y1="0" x2="1" y2="0"><stop offset="0" stop-color="#8a1a10"/><stop offset=".5" stop-color="#e8541a"/><stop offset=".75" stop-color="#f7a02a"/><stop offset="1" stop-color="#c8301a"/></linearGradient></defs>
<path d="M.5 13.5L8 9.5L13 5Q10 11 7 17Z" fill="#4e93d8"/><path d="M8 9.5L13 5L10.5 12.5Z" fill="#2a5ea8"/>
<path d="M7 17Q11 10 14 4Q15.5 .5 17 1.5Q19.5 6 23.5 18.5Q20 15 17.5 14Q14 17.5 10.5 22Q9 19.5 7 17Z" fill="url(#gm)"/></svg>
<!-- chrome -->
<svg class="abs" style="left:796px;top:735px" width="32" height="30">
<circle cx="13" cy="13" r="12" fill="#e33b2e"/>
<path d="M13 13L2.6 7A12 12 0 0 0 13 25L18.5 16Z" fill="#2da94f"/>
<path d="M13 13L13 25A12 12 0 0 0 23.4 7H13Z" fill="#fcc31e"/>
<path d="M2.6 7A12 12 0 0 1 23.4 7H13Z" fill="#e33b2e"/>
<circle cx="13" cy="13" r="5.6" fill="#fff"/><circle cx="13" cy="13" r="4.5" fill="#4285f4"/>
<circle cx="19" cy="19.2" r="7.6" fill="#0b57a5"/>
<text x="19" y="23" text-anchor="middle" font-family="Liberation Sans" font-size="11" fill="#fff">c</text></svg>
<!-- whatsapp -->
<div class="abs" style="left:834px;top:728px;width:48px;height:40px;background:#a3662f;border-bottom:2.5px solid #f47b16"></div>
<svg class="abs" style="left:845px;top:735px" width="30" height="30"><path d="M13 .8A11.6 11.6 0 1 1 7 22.2L1.2 24L3 18.5A11.6 11.6 0 0 1 13 .8Z" fill="#fff"/><circle cx="13" cy="12.4" r="9.6" fill="#2db742"/>
<path d="M9 7.5Q10 6.8 10.6 8L11.4 9.8Q11.6 10.4 10.6 11.2Q12 14 14.6 15Q15.4 14 16 14.2L18 15.2Q18.6 15.6 18 16.8Q16.6 18.6 13.8 17.4Q9.6 15.4 8.4 11Q8 8.6 9 7.5Z" fill="#fff"/>
<circle cx="19" cy="19" r="8" fill="#f0141e"/><text x="19" y="24" text-anchor="middle" font-family="Liberation Sans" font-size="14" fill="#fff">2</text></svg>
<!-- ppt -->
<svg class="abs" style="left:895px;top:736px" width="23" height="22"><defs><linearGradient id="gp" x1="0" y1="0" x2="0" y2="1"><stop offset="0" stop-color="#fbe3d6"/><stop offset=".55" stop-color="#f09a72"/><stop offset="1" stop-color="#fdf3ee"/></linearGradient></defs>
<path d="M2 .5H21.5V21.5H.5V2Z" fill="url(#gp)" stroke="#c23a14"/>
<rect x="1" y="15.5" width="20" height="5.5" fill="#fdf5f0"/>
<path d="M11 12.5L21.5 9L22.8 15.5L13 19Z" fill="#fff" stroke="#e8c4b4" stroke-width=".5"/><ellipse cx="17" cy="14" rx="2.6" ry="1.8" fill="#e8683c"/>
<text x="4" y="15" font-family="Liberation Sans" font-weight="bold" font-size="15" fill="#d2461c">P</text></svg>
<!-- excel -->
<svg class="abs" style="left:944px;top:736px" width="23" height="22"><defs><linearGradient id="gx" x1="0" y1="0" x2="0" y2="1"><stop offset="0" stop-color="#d9f0d6"/><stop offset=".55" stop-color="#7cc07a"/><stop offset="1" stop-color="#f0f8ee"/></linearGradient></defs>
<path d="M2 .5H21.5V21.5H.5V2Z" fill="url(#gx)" stroke="#1d7a36"/>
<rect x="1" y="15.5" width="20" height="5.5" fill="#f1f8ef"/>
<path d="M11 12.5L21.5 9L22.8 15.5L13 19Z" fill="#fff" stroke="#b8d8b4" stroke-width=".5"/><path d="M13 14.5L21 12M13.5 16.5L21.6 13.8" stroke="#7cc07a" stroke-width=".7"/>
<text x="3.5" y="15" font-family="Liberation Sans" font-weight="bold" font-size="15" fill="#1d6a30">X</text></svg>
<!-- spss -->
<div class="abs" style="left:981px;top:728px;width:45px;height:40px;background:#4a5564"></div>
<div class="abs" style="left:1026px;top:728px;width:3px;height:40px;background:#566170;border-left:1px solid #3c4654"></div>
<svg class="abs" style="left:992px;top:735px" width="26" height="26"><defs><linearGradient id="gs" x1="0" y1="0" x2="0" y2="1"><stop offset="0" stop-color="#86b9ea"/><stop offset=".5" stop-color="#4685cf"/><stop offset="1" stop-color="#2a62ae"/></linearGradient></defs>
<circle cx="13" cy="13" r="12" fill="url(#gs)"/>
<path d="M14 6.5H5.5L10 12.5L5.5 18.5H14" fill="none" stroke="#e8f0fa" stroke-width="1.3"/>
<text x="15" y="13.5" font-family="Liberation Sans" font-size="9" fill="#f0f6fc">α</text>
<path d="M15.5 19H20.5M18 16.8V21.4" stroke="#dce8f6" stroke-width="1"/></svg>
<!-- running indicators -->
<div class="ind" style="left:495px;width:40px"></div>
<div class="ind" style="left:544px;width:40px"></div>
<div class="ind" style="left:642px;width:31px"></div><div class="ind d" style="left:674px;width:8px"></div>
<div class="ind" style="left:789px;width:40px"></div>
<div class="ind" style="left:887px;width:40px"></div>
<div class="ind" style="left:936px;width:31px"></div><div class="ind d" style="left:968px;width:8px"></div>
<div class="ind" style="left:981px;width:45px"></div><div class="ind d" style="left:1027px;width:2px"></div>
<!-- tray -->
<svg class="abs" style="left:1079px;top:738px" width="27" height="22"><defs><linearGradient id="gcl" x1="0" y1="0" x2="0" y2="1"><stop offset="0" stop-color="#f4f8fd"/><stop offset="1" stop-color="#8fb4e4"/></linearGradient></defs><circle cx="18" cy="6.5" r="5.5" fill="#f59a23"/><path d="M5 20.5Q.5 20.5 .5 16.5Q.5 13 4.5 12.5Q5.5 7 11 7Q15.5 7 17 11Q20 10 22.5 12Q25.5 12.5 25.5 16.5Q25.5 20.5 21 20.5Z" fill="url(#gcl)"/></svg>
<div class="abs" style="left:1112.5px;top:737px;font-size:14px;line-height:22px;color:#e4e4e4;white-space:nowrap;letter-spacing:-.8px">26°C</div>
<svg class="abs" style="left:1158px;top:743px" width="15" height="10"><path d="M1.5 8.5L7.2 2.5L13 8.5" fill="none" stroke="#fff" stroke-width="1.4"/></svg>
<svg class="abs" style="left:1183px;top:741px" width="16" height="16"><g fill="none" stroke="#f0f0f0" stroke-width="1.2"><path d="M1.5 13A11.5 11.5 0 0 1 13 1.5"/><path d="M4.8 13.6A8 8 0 0 1 12.8 5.6" opacity=".8"/><path d="M8 14A4.8 4.8 0 0 1 12.8 9.2" opacity=".8"/></g><circle cx="12.2" cy="13.4" r="1.5" fill="#fff"/></svg>
<svg class="abs" style="left:1204px;top:741px" width="18" height="16"><path d="M1 5.5H4L8 1.8V14.2L4 10.5H1Z" fill="none" stroke="#fff" stroke-width="1.1"/><path d="M10.5 5.5Q12 8 10.5 10.5M12.6 3.6Q15.4 8 12.6 12.4" fill="none" stroke="#fff" stroke-width="1"/><path d="M14.8 1.8Q18.4 8 14.8 14.2" fill="none" stroke="#8a93a2" stroke-width="1"/></svg>
<svg class="abs" style="left:1229px;top:740px" width="18" height="18"><g fill="#fff"><path d="M1 2.5L4 .8L7 2.5L4 4.2Z"/><path d="M8.5 2.5L11.5 .8L14.5 2.5L11.5 4.2Z"/><path d="M1 7L4 5.3L7 7L4 8.7Z"/><path d="M8.5 7L11.5 5.3L14.5 7L11.5 8.7Z" opacity=".6"/><path d="M4.5 11L7.7 9.4L10.8 11L7.7 12.7Z" opacity=".8"/></g><circle cx="11.6" cy="11.6" r="4.6" fill="#e81224"/><path d="M9.6 9.6L13.6 13.6M13.6 9.6L9.6 13.6" stroke="#fff" stroke-width="1.1"/></svg>
<div class="abs" style="left:1240px;top:732px;width:80px;text-align:center;font-size:11.6px;line-height:14px;color:#fff;white-space:nowrap">4:48 AM</div>
<div class="abs" style="left:1241px;top:750px;width:80px;text-align:center;font-size:11.4px;line-height:14px;color:#fff;white-space:nowrap">11/27/2022</div>
<svg class="abs" style="left:1324px;top:739px" width="18" height="17"><path d="M.8 1H16.2V12H7L3.5 15.2V12H.8Z" fill="#fff"/><path d="M3 4H14M3 6.5H14M3 9H14" stroke="#1a2740" stroke-width=".9"/></svg>
<div class="abs" style="left:1331px;top:746px;width:19px;height:19px;border-radius:10px;background:#2b2b30;border:1px solid #8e8e8e"></div>
<div class="abs" style="left:1331px;top:746px;width:19px;height:19px;line-height:19px;text-align:center;font-size:11px;font-weight:bold;color:#fff;letter-spacing:-.3px">35</div>
<div class="abs" style="left:1360px;top:728px;width:1px;height:40px;background:#5a6578"></div>

<svg width="0" height="0" style="position:absolute"><defs>
<linearGradient id="gbtn" x1="0" y1="0" x2="0" y2="1"><stop offset="0" stop-color="#c8dffb"/><stop offset=".3" stop-color="#b0d1f8"/><stop offset=".55" stop-color="#93c2f4"/><stop offset="1" stop-color="#5ea4ec"/></linearGradient>
<linearGradient id="gbtnd" x1="0" y1="0" x2="0" y2="1"><stop offset="0" stop-color="#e6f0fd"/><stop offset=".5" stop-color="#cfe3fb"/><stop offset="1" stop-color="#a2cbf6"/></linearGradient>
<linearGradient id="gdark" x1="0" y1="0" x2="0" y2="1"><stop offset="0" stop-color="#707070"/><stop offset=".5" stop-color="#303030"/><stop offset="1" stop-color="#000"/></linearGradient>
</defs></svg>
<div id="dlg"></div><div id="dlgtitle"></div>
<svg class="abs" style="left:469px;top:197px" width="16" height="16"><use href="#i-spss"/></svg>
<div class="dt" style="left:490px;top:197px;font-size:11.9px;letter-spacing:0">One-Sample Kolmogorov-Smirnov Test</div>
<svg class="abs" style="left:884px;top:199px" width="12" height="12"><path d="M1 1L11 11M11 1L1 11" stroke="#000" stroke-width="1.1" fill="none"/></svg>
<div class="abs" style="left:471px;top:249px;width:150px;height:160px;background:#fff;border:1px solid #1c70c8"></div>
<svg class="abs" style="left:477px;top:252px" width="16" height="16"><use href="#i-ruler"/></svg>
<div class="dt" style="left:497.5px;top:252px;letter-spacing:-0.07px">Gaji Karyawan [X1]</div>
<svg class="abs" style="left:477px;top:270px" width="16" height="16"><use href="#i-ruler"/></svg>
<div class="dt" style="left:497.5px;top:270px;letter-spacing:0.14px">Jarak Tempuh [X2]</div>
<svg class="abs" style="left:477px;top:288px" width="16" height="16"><use href="#i-balls"/></svg>
<div class="dt" style="left:497.5px;top:288px;letter-spacing:0.07px">Kepuasan [Y]</div>
<svg class="abs" style="left:631px;top:314px" width="33" height="30"><path d="M3.3 0.5H28.7L31.5 3.3V26.7L28.7 29.5H3.3L0.5 26.7V3.3Z" fill="url(#gbtn)" stroke="#2384ea" stroke-width="1"/><path d="M3.9 1.5H28.1L30.5 3.9V26.1L28.1 28.5H3.9L1.5 26.1V3.9Z" fill="none" stroke="rgba(255,255,255,.18)" stroke-width="1"/></svg>
<svg class="abs" style="left:631px;top:314px" width="32" height="30"><path d="M9 15.3L15.8 9V13H20L23.1 10.1V14.5L19.5 17.7H15.8V22.1Z" fill="#6560d0"/></svg>
<div class="dt" style="left:674px;top:232px;letter-spacing:.22px"><u>T</u>est Variable List:</div>
<div class="abs" style="left:673px;top:249px;width:150px;height:160px;background:#fff;border:1.5px solid #0a0ab4"></div>
<div class="abs" style="left:676px;top:252px;width:144px;height:17px;background:#fde38a;border:1px solid #c9ad55"></div>
<svg class="abs" style="left:679px;top:252px" width="16" height="16"><use href="#i-ruler"/></svg>
<div class="dt" style="left:699.5px;top:252px;letter-spacing:.08px">Unstandardized Re...</div>
<svg class="abs" style="left:831px;top:235px" width="65" height="24"><path d="M3.3 0.5H60.7L63.5 3.3V20.7L60.7 23.5H3.3L0.5 20.7V3.3Z" fill="url(#gbtn)" stroke="#2384ea" stroke-width="1"/><path d="M3.9 1.5H60.1L62.5 3.9V20.1L60.1 22.5H3.9L1.5 20.1V3.9Z" fill="none" stroke="rgba(255,255,255,.18)" stroke-width="1"/></svg>
<div class="bl" style="left:831px;top:235px;width:64px;height:24px;line-height:27px;letter-spacing:-0.15px">E<u>x</u>act...</div>
<svg class="abs" style="left:831px;top:261px" width="65" height="24"><path d="M3.3 0.5H60.7L63.5 3.3V20.7L60.7 23.5H3.3L0.5 20.7V3.3Z" fill="url(#gbtn)" stroke="#2384ea" stroke-width="1"/><path d="M3.9 1.5H60.1L62.5 3.9V20.1L60.1 22.5H3.9L1.5 20.1V3.9Z" fill="none" stroke="rgba(255,255,255,.18)" stroke-width="1"/></svg>
<div class="bl" style="left:831px;top:261px;width:64px;height:24px;line-height:27px;letter-spacing:0.05px"><u>O</u>ptions...</div>
<div class="abs" style="left:473px;top:425px;width:347px;height:59px;border:1px solid #6ba5e6"></div>
<div class="dt" style="left:478px;top:418px;padding:0 4px 0 3.5px;background:#e2edfb;color:#3e3e9e;letter-spacing:.14px">Test Distribution</div>
<div class="cb" style="left:480px;top:442px"></div>
<div class="cb" style="left:549px;top:442px"></div>
<div class="cb" style="left:480px;top:464px"></div>
<div class="cb" style="left:549px;top:464px"></div>
<svg class="abs" style="left:480px;top:440px" width="15" height="15"><path d="M2.6 8.2L5.6 13.6L6.8 13.6L12.8 2.4L11.2 1.8L6.2 9.8L4.6 6.8Z" fill="#14148c"/></svg>
<div class="dt" style="left:498.5px;top:440px;letter-spacing:.2px"><u>N</u>ormal</div>
<div class="dt" style="left:567px;top:440px;letter-spacing:.15px"><u>U</u>niform</div>
<div class="dt" style="left:498.5px;top:462px;letter-spacing:.33px">Po<u>i</u>sson</div>
<div class="dt" style="left:567px;top:462px;letter-spacing:.05px"><u>E</u>xponential</div>
<svg class="abs" style="left:547px;top:495px" width="51.5" height="24"><path d="M3.3 0.5H47.2L50.0 3.3V20.7L47.2 23.5H3.3L0.5 20.7V3.3Z" fill="url(#gbtnd)" stroke="#2384ea" stroke-width="1"/><path d="M3.9 1.5H46.6L49.0 3.9V20.1L46.6 22.5H3.9L1.5 20.1V3.9Z" fill="none" stroke="url(#gdark)" stroke-width="1"/></svg>
<div class="bl" style="left:547px;top:495px;width:50.5px;height:24px;line-height:27px;letter-spacing:0.15px">OK</div>
<svg class="abs" style="left:602px;top:495px" width="51.5" height="24"><path d="M3.3 0.5H47.2L50.0 3.3V20.7L47.2 23.5H3.3L0.5 20.7V3.3Z" fill="url(#gbtn)" stroke="#2384ea" stroke-width="1"/><path d="M3.9 1.5H46.6L49.0 3.9V20.1L46.6 22.5H3.9L1.5 20.1V3.9Z" fill="none" stroke="rgba(255,255,255,.18)" stroke-width="1"/></svg>
<div class="bl" style="left:602px;top:495px;width:50.5px;height:24px;line-height:27px;letter-spacing:0.15px"><u>P</u>aste</div>
<svg class="abs" style="left:657px;top:495px" width="51.5" height="24"><path d="M3.3 0.5H47.2L50.0 3.3V20.7L47.2 23.5H3.3L0.5 20.7V3.3Z" fill="url(#gbtn)" stroke="#2384ea" stroke-width="1"/><path d="M3.9 1.5H46.6L49.0 3.9V20.1L46.6 22.5H3.9L1.5 20.1V3.9Z" fill="none" stroke="rgba(255,255,255,.18)" stroke-width="1"/></svg>
<div class="bl" style="left:657px;top:495px;width:50.5px;height:24px;line-height:27px;letter-spacing:0.4px"><u>R</u>eset</div>
<svg class="abs" style="left:712px;top:495px" width="51.5" height="24"><path d="M3.3 0.5H47.2L50.0 3.3V20.7L47.2 23.5H3.3L0.5 20.7V3.3Z" fill="url(#gbtn)" stroke="#2384ea" stroke-width="1"/><path d="M3.9 1.5H46.6L49.0 3.9V20.1L46.6 22.5H3.9L1.5 20.1V3.9Z" fill="none" stroke="rgba(255,255,255,.18)" stroke-width="1"/></svg>
<div class="bl" style="left:712px;top:495px;width:50.5px;height:24px;line-height:27px;letter-spacing:0.35px">Cancel</div>
<svg class="abs" style="left:767px;top:495px" width="51.5" height="24"><path d="M3.3 0.5H47.2L50.0 3.3V20.7L47.2 23.5H3.3L0.5 20.7V3.3Z" fill="url(#gbtn)" stroke="#2384ea" stroke-width="1"/><path d="M3.9 1.5H46.6L49.0 3.9V20.1L46.6 22.5H3.9L1.5 20.1V3.9Z" fill="none" stroke="rgba(255,255,255,.18)" stroke-width="1"/></svg>
<div class="bl" style="left:767px;top:495px;width:50.5px;height:24px;line-height:27px;letter-spacing:0.15px">Help</div>
</body></html>
